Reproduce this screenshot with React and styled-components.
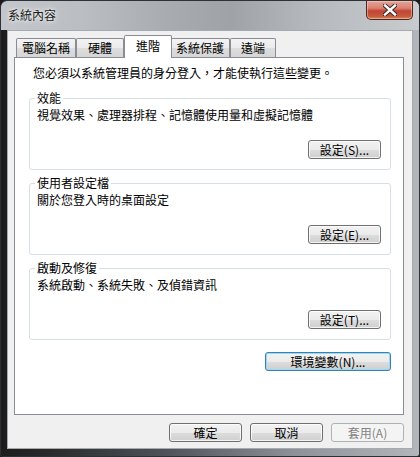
import styled, { createGlobalStyle } from 'styled-components';

const GlobalStyle = createGlobalStyle`
  html, body {
    margin: 0;
    padding: 0;
    background: #1a1a1a;
  }
  * {
    box-sizing: border-box;
  }
`;

const tabs = [
  { label: '電腦名稱', width: 60 },
  { label: '硬體', width: 48 },
  { label: '進階', width: 48, active: true },
  { label: '系統保護', width: 60 },
  { label: '遠端', width: 46 },
];

const groups = [
  { title: '效能', text: '視覺效果、處理器排程、記憶體使用量和虛擬記憶體', button: '設定(S)...' },
  { title: '使用者設定檔', text: '關於您登入時的桌面設定', button: '設定(E)...' },
  { title: '啟動及修復', text: '系統啟動、系統失敗、及偵錯資訊', button: '設定(T)...' },
];

const App = () => {
  return (
    <>
      <GlobalStyle />
      <Window>
        <TitleBar>
          <Title>系統內容</Title>
          <CloseButton aria-label="關閉">
            <svg width="14" height="12" viewBox="0 0 14 12">
              <path
                d="M2 1.5 L12 10.5 M12 1.5 L2 10.5"
                stroke="#3a2a2a"
                strokeWidth="4.4"
                strokeLinecap="square"
              />
              <path
                d="M2 1.5 L12 10.5 M12 1.5 L2 10.5"
                stroke="#ffffff"
                strokeWidth="2.4"
                strokeLinecap="square"
              />
            </svg>
          </CloseButton>
        </TitleBar>
        <Frame>
          <Client>
            <TabStrip>
              {tabs.map((tab) => (
                <Tab key={tab.label} $width={tab.width} $active={tab.active}>
                  {tab.label}
                </Tab>
              ))}
            </TabStrip>
            <Panel>
              <Intro>您必須以系統管理員的身分登入，才能使執行這些變更。</Intro>
              {groups.map((group) => (
                <Group key={group.title}>
                  <Legend>{group.title}</Legend>
                  <GroupText>{group.text}</GroupText>
                  <GroupActions>
                    <Button>{group.button}</Button>
                  </GroupActions>
                </Group>
              ))}
              <EnvRow>
                <Button $default $width={126}>
                  環境變數(N)...
                </Button>
              </EnvRow>
            </Panel>
            <DialogButtons>
              <Button>確定</Button>
              <Button>取消</Button>
              <Button disabled>套用(A)</Button>
            </DialogButtons>
          </Client>
        </Frame>
      </Window>
    </>
  );
};

export default App;

const font = `"Noto Sans CJK TC", "Noto Sans", sans-serif`;

const Window = styled.div`
  width: 420px;
  height: 457px;
  display: flex;
  flex-direction: column;
  border: 1px solid #2e3135;
  border-radius: 7px 7px 3px 3px;
  overflow: hidden;
  font-family: ${font};
  font-size: 12px;
  color: #000;
  background: linear-gradient(
    90deg,
    #1c1c1c 0%,
    #2a2a2a 12%,
    #50545a 40%,
    #8e9298 70%,
    #b3b7bc 100%
  );
`;

const TitleBar = styled.div`
  height: 29px;
  flex-shrink: 0;
  display: flex;
  justify-content: space-between;
  align-items: flex-start;
  padding: 0 6px 0 7px;
  background: linear-gradient(
    90deg,
    #c3c6ca 0%,
    #babdc1 20%,
    #a8acb1 40%,
    #9fa3a8 55%,
    #b6b9bd 75%,
    #c9cccf 100%
  );
`;

const Title = styled.div`
  margin-top: 7px;
  line-height: 14px;
  color: #1b1b1b;
  text-shadow: 0 0 6px rgba(255, 255, 255, 0.9), 0 0 3px rgba(255, 255, 255, 0.9);
`;

const CloseButton = styled.button`
  width: 47px;
  height: 19px;
  padding: 0;
  display: flex;
  align-items: center;
  justify-content: center;
  border: 1px solid #4d2722;
  border-top: none;
  border-radius: 0 0 5px 5px;
  background: linear-gradient(
    #e6a497 0%,
    #d9806f 40%,
    #c24535 55%,
    #c55a3d 85%,
    #d98a5a 100%
  );
  box-shadow: inset 0 0 0 1px rgba(255, 220, 210, 0.45);
`;

const Frame = styled.div`
  flex: 1;
  display: flex;
  padding: 0 6px 7px 6px;
  min-height: 0;
`;

const Client = styled.div`
  flex: 1;
  display: flex;
  flex-direction: column;
  border: 1px solid #a6abb1;
  background: #f0f0f0;
  padding: 4px 8px 6px 6px;
`;

const TabStrip = styled.div`
  display: flex;
  align-items: flex-end;
  padding-left: 2px;
  height: 22px;
  flex-shrink: 0;
`;

const Tab = styled.div`
  width: ${(p) => p.$width}px;
  height: ${(p) => (p.$active ? 23 : 19)}px;
  margin: ${(p) => (p.$active ? '0 -2px -1px' : '0')};
  position: relative;
  z-index: ${(p) => (p.$active ? 1 : 0)};
  display: flex;
  justify-content: center;
  align-items: ${(p) => (p.$active ? 'flex-start' : 'center')};
  padding-top: ${(p) => (p.$active ? '3px' : '0')};
  line-height: 14px;
  border: 1px solid #898c95;
  border-bottom: none;
  border-radius: 2px 2px 0 0;
  background: ${(p) =>
    p.$active ? '#ffffff' : 'linear-gradient(#f3f3f3 0%, #ebebeb 50%, #dddddd 51%, #d6d6d6 100%)'};
  & + & {
    margin-left: ${(p) => (p.$active ? '-2px' : '0')};
  }
`;

const Panel = styled.div`
  flex: 1;
  border: 1px solid #898c95;
  background: #ffffff;
  padding: 8px 12px 0 14px;
  display: flex;
  flex-direction: column;
`;

const Intro = styled.div`
  line-height: 14px;
  margin-left: 4px;
  margin-bottom: 11px;
`;

const Group = styled.fieldset`
  margin: 0 0 6px;
  padding: 3px 9px 10px 7px;
  border: 1px solid #d5dfe5;
  border-radius: 3px;
  min-width: 0;
`;

const Legend = styled.legend`
  padding: 0 2px;
  margin-left: -2px;
  line-height: 14px;
`;

const GroupText = styled.div`
  line-height: 14px;
`;

const GroupActions = styled.div`
  display: flex;
  justify-content: flex-end;
  margin-top: 18px;
`;

const EnvRow = styled.div`
  display: flex;
  justify-content: flex-end;
  margin-top: 6px;
`;

const DialogButtons = styled.div`
  display: flex;
  justify-content: flex-end;
  gap: 8px;
  margin-top: 8px;
  flex-shrink: 0;
`;

const Button = styled.button`
  width: ${(p) => p.$width || 73}px;
  height: 19px;
  padding: 0;
  font-family: ${font};
  font-size: 12px;
  line-height: 14px;
  color: #000;
  border: 1px solid ${(p) => (p.$default ? '#3c7fb1' : '#707070')};
  border-radius: 3px;
  background: linear-gradient(#f2f2f2 0%, #ebebeb 50%, #dddddd 51%, #cfcfcf 100%);
  box-shadow: inset 0 0 0 1px ${(p) => (p.$default ? '#94dbf6' : 'rgba(255, 255, 255, 0.75)')};

  &:disabled {
    color: #838383;
    border-color: #adb2b5;
    background: #f4f4f4;
    box-shadow: none;
  }
`;
